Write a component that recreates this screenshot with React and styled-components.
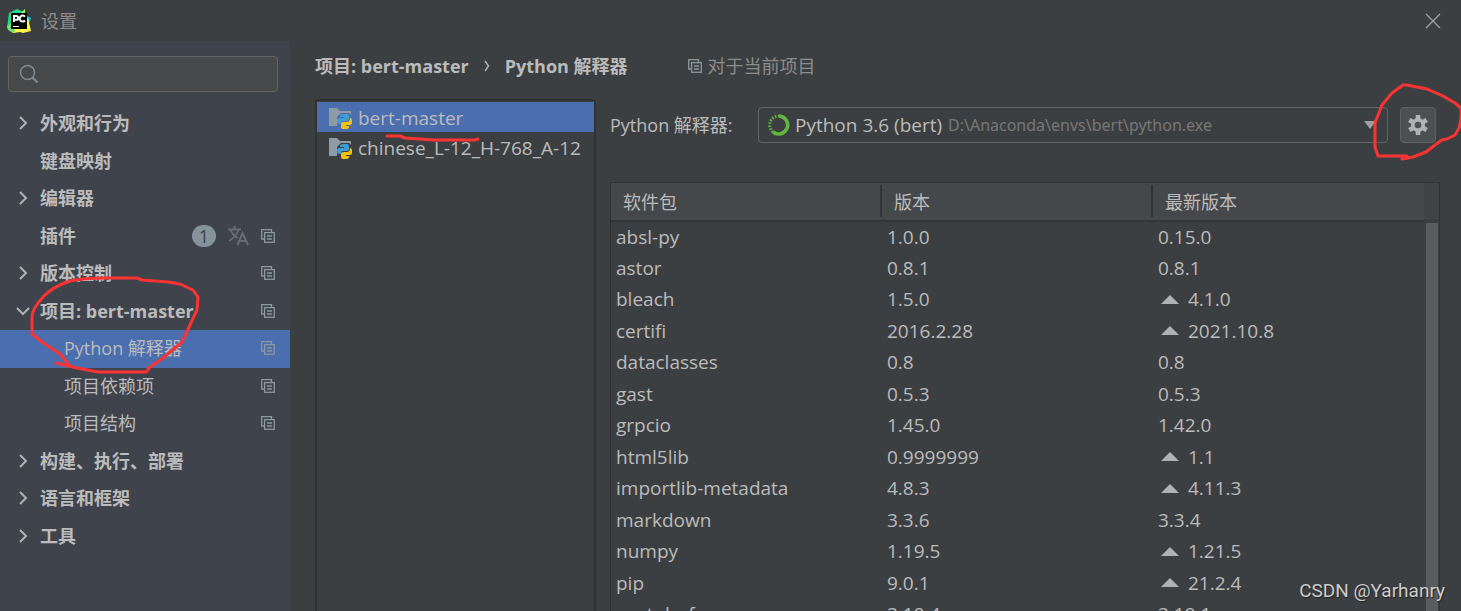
import styled, { createGlobalStyle } from 'styled-components';

const GlobalStyle = createGlobalStyle`
  * {
    box-sizing: border-box;
  }

  body {
    margin: 0;
    background-color: #3c3f41;
    color: #bbbbbb;
    font-family: "Open Sans", "Noto Sans CJK SC", sans-serif;
    font-size: 18px;
    line-height: 24px;
  }

  button, input, select {
    font: inherit;
    color: inherit;
  }

  svg {
    flex-shrink: 0;
  }
`;

const treeItems = [
    { label: "外观和行为", arrow: "right" },
    { label: "键盘映射" },
    { label: "编辑器", arrow: "right" },
    { label: "插件", badge: 1, translate: true, copy: true },
    { label: "版本控制", arrow: "right", copy: true },
    { label: "项目: bert-master", arrow: "down", copy: true },
    { label: "Python 解释器", child: true, copy: true, selected: true },
    { label: "项目依赖项", child: true, copy: true },
    { label: "项目结构", child: true, copy: true },
    { label: "构建、执行、部署", arrow: "right" },
    { label: "语言和框架", arrow: "right" },
    { label: "工具", arrow: "right" },
];

const projects = ["bert-master", "chinese_L-12_H-768_A-12"];

const packages = [
    { name: "absl-py", version: "1.0.0", latest: "0.15.0" },
    { name: "astor", version: "0.8.1", latest: "0.8.1" },
    { name: "bleach", version: "1.5.0", latest: "4.1.0", upgrade: true },
    { name: "certifi", version: "2016.2.28", latest: "2021.10.8", upgrade: true },
    { name: "dataclasses", version: "0.8", latest: "0.8" },
    { name: "gast", version: "0.5.3", latest: "0.5.3" },
    { name: "grpcio", version: "1.45.0", latest: "1.42.0" },
    { name: "html5lib", version: "0.9999999", latest: "1.1", upgrade: true },
    { name: "importlib-metadata", version: "4.8.3", latest: "4.11.3", upgrade: true },
    { name: "markdown", version: "3.3.6", latest: "3.3.4" },
    { name: "numpy", version: "1.19.5", latest: "1.21.5", upgrade: true },
    { name: "pip", version: "9.0.1", latest: "21.2.4", upgrade: true },
    { name: "protobuf", version: "3.19.4", latest: "3.19.1" },
];

const LogoIcon = () => (
    <svg width="24" height="24" viewBox="0 0 24 24">
        <path d="M2 4 10 0 17 3 12 13 6 23 0 19Z" fill="#21d789" />
        <path d="M14 4 18 0 18 6 24 9 22 14 17 13Z" fill="#07c3f2" />
        <path d="M13 5 18 0 18 6Z" fill="#b4f35a" />
        <path d="M21 9 24 22 16 24 13 23 6 24 3 20Z" fill="#fcf84a" />
        <path d="M0 17 4 14 8 22 6 24 1 21Z" fill="#6be06e" />
        <rect x="4" y="4" width="16" height="16" fill="#000" />
        <rect x="6" y="17" width="6" height="1" fill="#fff" />
        <g fill="none" stroke="#fff" strokeWidth="2">
            <path d="M7 13V7H9.300A1.900 1.900 0 0 1 9.300 10.800H7" />
            <path d="M18 7.700A3 3 0 1 0 18 11.500" />
        </g>
    </svg>
);

const CloseIcon = () => (
    <svg width="16" height="16" viewBox="0 0 16 16">
        <path d="M1 1 15 15M15 1 1 15" stroke="#a0a1a2" strokeWidth="1.300" />
    </svg>
);

const SearchIcon = () => (
    <svg width="20" height="20" viewBox="0 0 20 20" fill="none" stroke="#7f8b91">
        <circle cx="8.500" cy="8.500" r="7" strokeWidth="1.500" />
        <path d="M13.500 13.500 18.500 18.500" strokeWidth="2.200" />
    </svg>
);

const ArrowIcon = ({ open }) => (
    <svg width="14" height="14" viewBox="0 0 14 14" fill="none" stroke="#b0b1b3" strokeWidth="2">
        <path d={open ? "M1 4 7 10 13 4" : "M4 1 10 7 4 13"} />
    </svg>
);

const CrumbIcon = () => (
    <svg width="6" height="12" viewBox="0 0 6 12" fill="none" stroke="#b0b1b3" strokeWidth="1.500">
        <path d="M1 1 4.500 6 1 11" />
    </svg>
);

const CopyIcon = () => (
    <svg width="14" height="14" viewBox="0 0 14 14" fill="none" stroke="#8c979e" strokeWidth="1.300">
        <path d="M3 10H.700V.700H10.500V3" />
        <rect x="3.600" y="3.600" width="9.700" height="9.700" />
        <path d="M6 7H11M6 10H11" />
    </svg>
);

const TranslateIcon = () => (
    <svg width="21" height="20" viewBox="0 0 21 20" fill="none" stroke="#646c74" strokeWidth="2">
        <path d="M0 3.500H13M6.500 0V3.500M3 4C4 8 7 10.500 9.500 12M10.500 4C9 9 5 12.500 1 15" />
        <path d="M9.500 19 14.500 7 20 19M11.500 15H18" />
    </svg>
);

const FolderIcon = () => (
    <svg width="23" height="21" viewBox="0 0 23 21">
        <path d="M0 0H8L11 3H22V7L20 5H12L8 9V18H0Z" fill="#8e9ba4" />
        <path d="M15 6H18Q20 6 20 8V11Q20 13 18 13H14Q12 13 12 16H10Q8 16 8 13V12Q8 10 10 10H15V9H11V8Q11 6 15 6Z" fill="#3f9cd2" />
        <path d="M16 21H15Q12 21 12 19V16Q12 14 15 14H18Q21 14 21 10Q23 10 23 13V15Q23 17 21 17H17V18H20V19Q20 21 16 21Z" fill="#f5c20b" />
    </svg>
);

const RingIcon = () => (
    <svg width="22" height="22" viewBox="0 0 22 22" fill="none" stroke="#62b543">
        <path d="M11 2A9 9 0 1 1 5 18" strokeWidth="3.600" />
        <path d="M5 18A9 9 0 0 1 11 2" strokeWidth="3" strokeDasharray="1.500 1.500" />
    </svg>
);

const GearIcon = () => (
    <svg width="20" height="20" viewBox="0 0 20 20">
        <g stroke="#b0b2b4" strokeWidth="4.600">
            <path d="M10 0V20M1.300 5 18.700 15M18.700 5 1.300 15" />
        </g>
        <circle cx="10" cy="10" r="7" fill="#b0b2b4" />
        <circle cx="10" cy="10" r="3.300" fill="#4c5052" />
    </svg>
);

const DropIcon = () => (
    <svg width="12" height="8" viewBox="0 0 12 8">
        <path d="M0 0H12L6 8Z" fill="#9da0a2" />
    </svg>
);

const UpgradeIcon = () => (
    <svg width="18" height="9" viewBox="0 0 18 9">
        <path d="M0 9 9 0 18 9Z" fill="#afb1b3" />
    </svg>
);

const App = () => {
    return (
        <Window>
            <GlobalStyle />
            <TitleBar>
                <LogoIcon />
                <WindowTitle>设置</WindowTitle>
                <CloseButton aria-label="关闭"><CloseIcon /></CloseButton>
            </TitleBar>
            <Body>
                <Sidebar>
                    <SearchBox>
                        <SearchIcon />
                        <SearchInput type="text" aria-label="搜索" />
                    </SearchBox>
                    <Tree>
                        {treeItems.map((item) => (
                            <TreeRow key={item.label} $selected={item.selected} $child={item.child}>
                                <ArrowSlot>
                                    {item.arrow && <ArrowIcon open={item.arrow === "down"} />}
                                </ArrowSlot>
                                <TreeLabel>{item.label}</TreeLabel>
                                {item.badge && <Badge>{item.badge}</Badge>}
                                {item.translate && <TranslateIcon />}
                                {item.copy && <CopyIcon />}
                            </TreeRow>
                        ))}
                        <TreeMark width="170" height="100" viewBox="0 0 170 100">
                            <path d="M26 88 47 93 68 97H116L120 92 133 83 152 67 167 35 168 22 163 15 150 9 138 7 112 5 107 3H77Q52 3 40 6Q22 12 13 22Q2 34 2 42V59L12 67 30 79 40 91" />
                        </TreeMark>
                    </Tree>
                </Sidebar>
                <Main>
                    <Breadcrumb>
                        <Crumb>项目: bert-master</Crumb>
                        <CrumbArrow><CrumbIcon /></CrumbArrow>
                        <Crumb>Python 解释器</Crumb>
                        <Scope><CopyIcon />对于当前项目</Scope>
                    </Breadcrumb>
                    <Columns>
                        <ProjectList>
                            {projects.map((project, index) => (
                                <ProjectRow key={project} $selected={index === 0}>
                                    <FolderIcon />
                                    {project}
                                </ProjectRow>
                            ))}
                            <ProjectMark width="96" height="8" viewBox="0 0 96 8">
                                <path d="M2 2H15L20 4 48 6H90L93 5" />
                            </ProjectMark>
                        </ProjectList>
                        <Interpreter>
                            <InterpreterRow>
                                <InterpreterLabel htmlFor="interpreter">Python 解释器:</InterpreterLabel>
                                <Combo>
                                    <RingIcon />
                                    <ComboSelect id="interpreter">
                                        <option>Python 3.6 (bert)</option>
                                    </ComboSelect>
                                    <ComboPath>D:\Anaconda\envs\bert\python.exe</ComboPath>
                                    <DropIcon />
                                </Combo>
                                <GearButton aria-label="设置">
                                    <GearIcon />
                                    <GearMark width="90" height="80" viewBox="0 0 90 80">
                                        <path d="M28 76 39 74 52 69 61 62 68 57 73 56 81 52 85 45Q88 36 87 25L81 20 69 13 53 6 33 2H29L18 10 8 22 1 40V64L4 73H33" />
                                    </GearMark>
                                </GearButton>
                            </InterpreterRow>
                            <TableBox>
                                <PackageTable>
                                    <thead>
                                        <tr>
                                            <HeadCell>软件包</HeadCell>
                                            <HeadCell>版本</HeadCell>
                                            <HeadCell>最新版本</HeadCell>
                                        </tr>
                                    </thead>
                                    <tbody>
                                        {packages.map((item) => (
                                            <PackageRow key={item.name}>
                                                <Cell>{item.name}</Cell>
                                                <Cell>{item.version}</Cell>
                                                <Cell>
                                                    <Latest $upgrade={item.upgrade}>
                                                        {item.upgrade && <UpgradeIcon />}
                                                        {item.latest}
                                                    </Latest>
                                                </Cell>
                                            </PackageRow>
                                        ))}
                                    </tbody>
                                </PackageTable>
                                <ScrollTrack>
                                    <ScrollThumb />
                                </ScrollTrack>
                            </TableBox>
                        </Interpreter>
                    </Columns>
                </Main>
            </Body>
            <Watermark>CSDN @Yarhanry</Watermark>
        </Window>
    );
};

const Window = styled.div`
  position: relative;
  display: flex;
  flex-direction: column;
  height: 100vh;
  overflow: hidden;
`;

const TitleBar = styled.header`
  display: flex;
  align-items: center;
  flex-shrink: 0;
  gap: 10px;
  height: 41px;
  padding: 0 20px 0 7px;
`;

const WindowTitle = styled.span`
  flex: 1;
  color: #8c8c8c;
`;

const CloseButton = styled.button`
  display: flex;
  padding: 0;
  border: none;
  background: none;
`;

const Body = styled.div`
  display: flex;
  flex: 1;
  min-height: 0;
`;

const Sidebar = styled.aside`
  flex: 0 0 290px;
  min-width: 0;
  padding-top: 15px;
  background-color: #3f434c;
`;

const SearchBox = styled.div`
  display: flex;
  align-items: center;
  height: 36px;
  margin: 0 12px 13px 8px;
  padding: 0 10px;
  border: 1px solid #646464;
  border-radius: 4px;
  background-color: #45494a;
`;

const SearchInput = styled.input`
  flex: 1;
  min-width: 0;
  border: none;
  outline: none;
  background: none;
`;

const Tree = styled.ul`
  position: relative;
  margin: 0;
  padding: 0;
  list-style: none;
`;

const TreeRow = styled.li`
  display: flex;
  align-items: center;
  gap: 12px;
  height: 37px;
  padding-bottom: 2px;
  padding-left: ${(props) => (props.$child ? "40px" : "16px")};
  padding-right: 15px;
  background-color: ${(props) => (props.$selected ? "#4b6eaf" : "transparent")};
  font-weight: ${(props) => (props.$child ? 400 : 700)};

  &:nth-child(odd) {
    height: 38px;
  }
`;

const ArrowSlot = styled.span`
  display: flex;
  width: 12px;
`;

const TreeLabel = styled.span`
  flex: 1;
  white-space: nowrap;
`;

const Badge = styled.span`
  width: 24px;
  height: 22px;
  border-radius: 11px;
  background-color: #87939a;
  color: #3f434c;
  font-weight: 400;
  line-height: 22px;
  text-align: center;
`;

const Mark = styled.svg`
  position: absolute;
  overflow: visible;
  fill: none;
  stroke: #fb3433;
  stroke-width: 3;
  stroke-linecap: round;
  stroke-linejoin: round;
  pointer-events: none;
`;

const TreeMark = styled(Mark)`
  top: 170px;
  left: 30px;
`;

const ProjectMark = styled(Mark)`
  top: 33px;
  left: 68px;
`;

const GearMark = styled(Mark)`
  top: -25px;
  left: -27px;
`;

const Main = styled.main`
  display: flex;
  flex: 1;
  flex-direction: column;
  min-width: 0;
  padding: 13px 21px 0 25px;
`;

const Breadcrumb = styled.nav`
  display: flex;
  align-items: center;
  height: 24px;
  margin-bottom: 21px;
`;

const Crumb = styled.span`
  font-weight: 700;
`;

const CrumbArrow = styled.span`
  display: flex;
  justify-content: center;
  width: 36px;
`;

const Scope = styled.span`
  display: flex;
  align-items: center;
  gap: 6px;
  margin-left: 60px;
  color: #8c8c8c;
`;

const Columns = styled.div`
  display: flex;
  flex: 1;
  gap: 14px;
  min-height: 0;
`;

const ProjectList = styled.ul`
  position: relative;
  flex: 0 0 281px;
  margin: 0;
  padding: 1px 0 0;
  border: 2px solid #323232;
  border-bottom: none;
  font-size: 19px;
  list-style: none;
`;

const ProjectRow = styled.li`
  display: flex;
  align-items: center;
  gap: 6px;
  height: 30px;
  padding-top: 2px;
  padding-left: 12px;
  background-color: ${(props) => (props.$selected ? "#4b6eaf" : "transparent")};
  white-space: nowrap;
`;

const Interpreter = styled.section`
  display: flex;
  flex: 1;
  flex-direction: column;
  min-width: 0;
  padding-top: 8px;
`;

const InterpreterRow = styled.div`
  display: flex;
  align-items: center;
  margin-bottom: 39px;
  padding-right: 4px;
`;

const InterpreterLabel = styled.label`
  width: 148px;
`;

const Combo = styled.div`
  display: flex;
  align-items: center;
  flex: 1;
  height: 36px;
  min-width: 0;
  margin-right: 12px;
  padding: 0 11px 0 9px;
  border: 1px solid #646464;
  border-radius: 4px;
`;

const ComboSelect = styled.select`
  margin: 0 5px;
  padding: 0;
  border: none;
  outline: none;
  background: none;
  font-size: 19px;
  appearance: none;
`;

const ComboPath = styled.span`
  flex: 1;
  overflow: hidden;
  color: #777777;
  font-family: "Noto Sans", sans-serif;
  font-size: 16px;
  white-space: nowrap;
`;

const GearButton = styled.button`
  position: relative;
  display: flex;
  align-items: center;
  justify-content: center;
  width: 36px;
  height: 36px;
  padding: 0;
  border: 1px solid #5e6060;
  border-radius: 4px;
  background-color: #4c5052;
`;

const TableBox = styled.div`
  display: flex;
  flex: 1;
  min-height: 0;
  overflow: hidden;
  border: 1px solid #323232;
  border-bottom: none;
`;

const PackageTable = styled.table`
  flex: 1;
  align-self: flex-start;
  width: 100%;
  border-collapse: collapse;
  table-layout: fixed;
`;

const HeadCell = styled.th`
  height: 38px;
  padding: 0 0 0 12px;
  border-bottom: 2px solid #323537;
  background-color: #45484a;
  background-image: linear-gradient(#323537, #323537);
  background-position: right 2px;
  background-repeat: no-repeat;
  background-size: 2px 32px;
  font-weight: 400;
  text-align: left;

  &:last-child {
    background-image: none;
  }
`;

const PackageRow = styled.tr`
  height: 31px;
  font-size: 19px;

  &:nth-child(odd) {
    height: 32px;
  }
`;

const Cell = styled.td`
  padding: 0 0 2px 5px;
`;

const Latest = styled.span`
  display: flex;
  align-items: center;
  gap: 9px;
  padding-left: ${(props) => (props.$upgrade ? "3px" : "0")};
`;

const ScrollTrack = styled.div`
  flex: 0 0 15px;
  padding: 40px 1px 0 2px;
  background: linear-gradient(#414445, #414445) no-repeat top / 100% 36px;
`;

const ScrollThumb = styled.div`
  height: 100%;
  background-color: #595b5d;
`;

const Watermark = styled.div`
  position: absolute;
  right: 16px;
  bottom: 8px;
  color: #cccccc;
  font-family: Roboto, sans-serif;
  font-size: 19px;
  text-shadow: 1px 1px 1px #222222;
`;

export default App;
